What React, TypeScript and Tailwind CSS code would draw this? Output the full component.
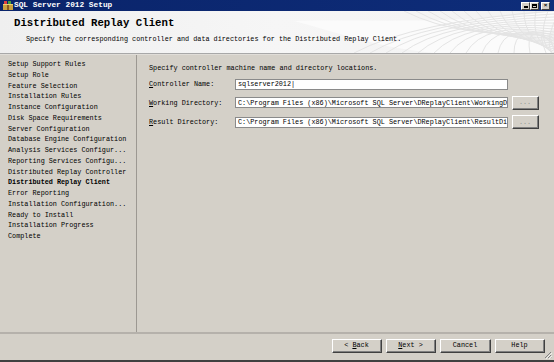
import React from "react";

const mono = { fontFamily: '"Liberation Mono", "DejaVu Sans Mono", monospace' };

function Btn({ children, w }: { children: React.ReactNode; w: string }) {
  return (
    <div className={`${w} h-[14px] border border-t-white border-l-white border-r-[#404040] border-b-[#404040] bg-[#d4d0c8]`}>
      <div className="w-full h-full border-r border-b border-r-[#808080] border-b-[#808080] flex items-center justify-center text-[6.8px] text-black whitespace-pre">
        {children}
      </div>
    </div>
  );
}

function Field({ value }: { value: string }) {
  return (
    <div className="w-[273px] h-[11px] border border-[#8a8a8a] bg-white flex items-center pl-[2px] overflow-hidden whitespace-nowrap text-[6.8px] text-black">
      {value}
    </div>
  );
}

function WinBtn({ children }: { children: React.ReactNode }) {
  return (
    <div className="w-[9px] h-[8px] bg-[#d4d0c8] border border-t-white border-l-white border-r-[#404040] border-b-[#404040] flex items-center justify-center text-[6px] leading-none font-bold text-black">
      {children}
    </div>
  );
}

const steps = [
  "Setup Support Rules",
  "Setup Role",
  "Feature Selection",
  "Installation Rules",
  "Instance Configuration",
  "Disk Space Requirements",
  "Server Configuration",
  "Database Engine Configuration",
  "Analysis Services Configur...",
  "Reporting Services Configu...",
  "Distributed Replay Controller",
  "Distributed Replay Client",
  "Error Reporting",
  "Installation Configuration...",
  "Ready to Install",
  "Installation Progress",
  "Complete",
];

export default function App() {
  return (
    <div className="w-[554px] h-[362px] flex flex-col bg-[#d4d0c8] overflow-hidden antialiased" style={mono}>
      {/* Title bar */}
      <div className="h-[11px] flex items-center bg-gradient-to-r from-[#0a246a] to-[#0e2d7a] pl-[3px] pr-[4px]">
        <svg width="10" height="9" viewBox="0 0 10 9" className="mr-[1px]">
          <rect x="0" y="3" width="10" height="6" fill="#c8a040" />
          <rect x="0" y="3" width="10" height="1" fill="#f0d070" />
          <rect x="1" y="0" width="3" height="3" fill="#e04040" />
          <rect x="5" y="0" width="3" height="3" fill="#40a040" />
          <rect x="4" y="4" width="2" height="5" fill="#8a5a20" />
        </svg>
        <span className="text-white font-bold text-[7.8px] leading-none">SQL Server 2012 Setup</span>
        <div className="ml-auto flex items-center">
          <WinBtn>
            <span className="block w-[4px] h-[1.5px] bg-black mt-[3px]" />
          </WinBtn>
          <WinBtn>
            <span className="block w-[5px] h-[4px] border border-black border-t-2" />
          </WinBtn>
          <div className="w-[2px]" />
          <WinBtn>×</WinBtn>
        </div>
      </div>

      {/* Header */}
      <div className="relative h-[42px] bg-gradient-to-r from-[#efefef] via-[#f6f6f6] to-[#f2f2f2] overflow-hidden">
        <svg className="absolute right-0 top-0" width="260" height="42" viewBox="0 0 260 42">
          <path d="M0 10 C 80 8, 160 14, 260 0 L260 42 L 140 42 C 80 36, 40 20, 0 10Z" fill="#fbfbfb" />
          {Array.from({ length: 14 }).map((_, i) => (
            <path key={"a" + i} d={`M${60 + i * 16} 42 Q ${120 + i * 10} 10 ${260} ${i * 3}`} stroke="#e4e4e4" strokeWidth="1" fill="none" />
          ))}
          {Array.from({ length: 14 }).map((_, i) => (
            <path key={"b" + i} d={`M${110 + i * 12} 0 Q ${170 + i * 6} 30 ${260} ${20 + i * 2}`} stroke="#e4e4e4" strokeWidth="1" fill="none" />
          ))}
        </svg>
        <div className="relative pl-[14px] pt-[5px] text-[10.7px] font-bold leading-[14px] text-black">
          Distributed Replay Client
        </div>
        <div className="relative pl-[26px] pt-[5px] text-[6.8px] leading-[8px] text-black">
          Specify the corresponding controller and data directories for the Distributed Replay Client.
        </div>
      </div>
      <div className="h-[1px] bg-[#a8a8a8]" />
      <div className="h-[1px] bg-[#e0ddd8]" />

      {/* Main */}
      <div className="flex flex-1">
        <div className="w-[137px] pt-[4px] pl-[8px] border-r border-[#9c9892]">
          {steps.map((s) => (
            <div
              key={s}
              className={`text-[6.8px] leading-[10.75px] whitespace-nowrap text-black ${s === "Distributed Replay Client" ? "font-bold" : ""}`}
            >
              {s}
            </div>
          ))}
        </div>
        <div className="flex-1 pl-[12px] pt-[9px]">
          <div className="text-[6.8px] leading-[8px] text-black">
            Specify controller machine name and directory locations.
          </div>
          <div className="mt-[7px] flex flex-col gap-[5.7px]">
            <div className="flex items-center">
              <div className="w-[86px] text-[6.8px] text-black"><u>C</u>ontroller Name:</div>
              <Field value="sqlserver2012|" />
            </div>
            <div className="flex items-center">
              <div className="w-[86px] text-[6.8px] text-black"><u>W</u>orking Directory:</div>
              <Field value="C:\Program Files (x86)\Microsoft SQL Server\DReplayClient\WorkingD" />
              <div className="ml-[4px]"><Btn w="w-[27px]"><span className="text-[#909090]">...</span></Btn></div>
            </div>
            <div className="flex items-center">
              <div className="w-[86px] text-[6.8px] text-black"><u>R</u>esult Directory:</div>
              <Field value="C:\Program Files (x86)\Microsoft SQL Server\DReplayClient\ResultDi" />
              <div className="ml-[4px]"><Btn w="w-[27px]"><span className="text-[#909090]">...</span></Btn></div>
            </div>
          </div>
        </div>
      </div>

      {/* Footer */}
      <div className="h-[2px] bg-[#b5b1ab]" />
      <div className="h-[26px] relative flex items-start pt-[5px] pl-[332px] gap-[4px]">
        <Btn w="w-[50px]">{"< "}<u>B</u>ack</Btn>
        <Btn w="w-[50px]"><u>N</u>{"ext >"}</Btn>
        <Btn w="w-[51px]">Cancel</Btn>
        <Btn w="w-[50px]">Help</Btn>
        <svg className="absolute right-[2px] bottom-[1px]" width="8" height="8" viewBox="0 0 8 8">
          <path d="M7 1 L1 7 M7 4 L4 7 M7 6.5 L6.5 7" stroke="#808080" strokeWidth="1" />
          <path d="M8 2 L2 8 M8 5 L5 8" stroke="#ffffff" strokeWidth="0.7" />
        </svg>
      </div>
      <div className="h-[2px] bg-[#404040]" />
    </div>
  );
}
